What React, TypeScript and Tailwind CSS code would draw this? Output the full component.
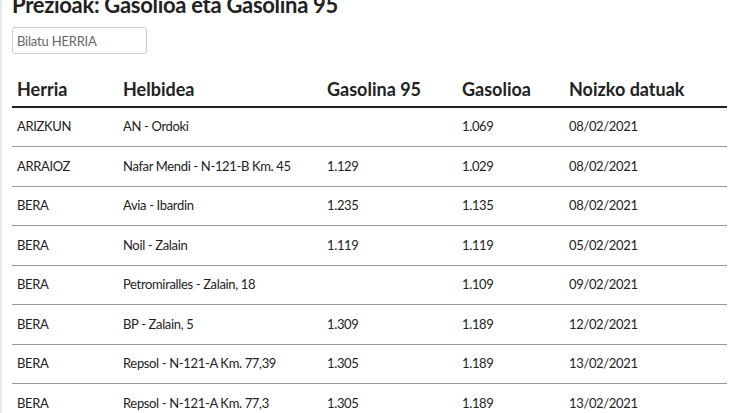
import React from "react";

const rows = [
  ["ARIZKUN", "AN - Ordoki", "", "1.069", "08/02/2021"],
  ["ARRAIOZ", "Nafar Mendi - N-121-B Km. 45", "1.129", "1.029", "08/02/2021"],
  ["BERA", "Avia - Ibardin", "1.235", "1.135", "08/02/2021"],
  ["BERA", "Noil - Zalain", "1.119", "1.119", "05/02/2021"],
  ["BERA", "Petromiralles - Zalain, 18", "", "1.109", "09/02/2021"],
  ["BERA", "BP - Zalain, 5", "1.309", "1.189", "12/02/2021"],
  ["BERA", "Repsol - N-121-A Km. 77,39", "1.305", "1.189", "13/02/2021"],
  ["BERA", "Repsol - N-121-A Km. 77,3", "1.305", "1.189", "13/02/2021"],
];

export default function App() {
  return (
    <div
      className="h-[413px] w-[735px] overflow-hidden bg-white text-[#333] border-l-2 border-[#e8e8e8]"
      style={{ fontFamily: "Lato, 'Noto Sans', sans-serif" }}
    >
      <div className="pl-[10px] pr-[8px]">
        <h1 className="mt-[-8px] text-[22px] font-bold leading-[26px] tracking-[-0.3px] text-[#222]">
          Prezioak: Gasolioa eta Gasolina 95
        </h1>
        <input
          className="mt-[9px] block h-[27px] w-[135px] rounded-[3px] border border-[#ccc] px-[4px] text-[13px] tracking-[-0.2px] text-[#555] placeholder-[#666] outline-none"
          placeholder="Bilatu HERRIA"
        />
        <table className="mt-[18px] w-[715px] table-fixed border-collapse text-[13px] tracking-[-0.35px]">
          <colgroup>
            <col className="w-[106px]" />
            <col className="w-[204px]" />
            <col className="w-[135px]" />
            <col className="w-[107px]" />
            <col className="w-[163px]" />
          </colgroup>
          <thead>
            <tr className="border-b-2 border-[#222]">
              {["Herria", "Helbidea", "Gasolina 95", "Gasolioa", "Noizko datuak"].map((h) => (
                <th key={h} className="h-[35px] px-[5px] text-left align-middle text-[18px] tracking-[0px] font-bold text-[#222]">
                  {h}
                </th>
              ))}
            </tr>
          </thead>
          <tbody>
            {rows.map((r, i) => (
              <tr key={i} className="border-b border-[#999]">
                {r.map((c, j) => (
                  <td key={j} className="h-[39.5px] px-[5px] align-middle text-[#222]">
                    {c}
                  </td>
                ))}
              </tr>
            ))}
          </tbody>
        </table>
      </div>
    </div>
  );
}
